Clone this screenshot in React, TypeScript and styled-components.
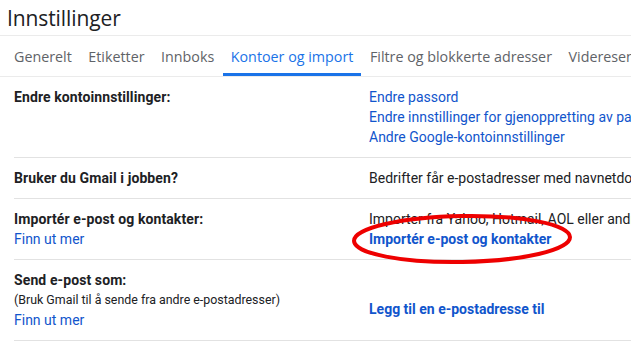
import styled, { createGlobalStyle } from "styled-components";

const Global = createGlobalStyle`
    html, body { margin: 0; padding: 0; background: #ffffff; }
    body { font-family: Roboto, "Liberation Sans", Arial, sans-serif; color: #202124; }
`

const Page = styled.div`
    position: relative;
    width: 631px;
    height: 347px;
    overflow: hidden;
    white-space: nowrap;
`

const Header = styled.div`
    height: 36px;
    border-bottom: 1px solid #ebebeb;
    box-sizing: border-box;
    padding-left: 7px;
    display: flex;
    align-items: center;
`

const Title = styled.h1`
    margin: 0;
    font-family: "Open Sans", Roboto, sans-serif;
    font-size: 21px;
    font-weight: 400;
    color: #202124;
    letter-spacing: -0.1px;
`

const TabBar = styled.div`
    display: flex;
    height: 41px;
    padding-left: 6px;
    border-bottom: 1px solid #ebebeb;
    box-sizing: border-box;
`

const TabItem = styled.div<{ $active?: boolean }>`
    display: flex;
    align-items: center;
    padding: 0 8px;
    margin-right: 0.5px;
    font-family: "Open Sans", Roboto, sans-serif;
    font-size: 14.3px;
    font-weight: 500;
    color: ${p => p.$active ? '#1a73e8' : '#5f6368'};
    border-bottom: 3px solid ${p => p.$active ? '#1a73e8' : 'transparent'};
    padding-top: 3px;
`

const Row = styled.div`
    display: grid;
    grid-template-columns: 355px 1fr;
    margin-left: 14px;
    padding: 10px 0;
    border-bottom: 1px solid #e2e2e2;
    line-height: 20px;
    font-size: 14px;
`

const Label = styled.div`
    display: flex;
    flex-direction: column;
`

const Strong = styled.span`
    font-weight: 700;
    color: #202124;
    letter-spacing: 0.1px;
`

const Note = styled.span`
    font-size: 12.4px;
    color: #202124;
    line-height: 20px;
`

const Value = styled.div<{ $offset?: number }>`
    display: flex;
    flex-direction: column;
    padding-top: ${p => p.$offset || 0}px;
`

const Link = styled.a<{ $bold?: boolean }>`
    color: #1155cc;
    text-decoration: none;
    font-weight: ${p => p.$bold ? 700 : 400};
    cursor: pointer;
`

const Text = styled.span`
    color: #202124;
`

const Mark = styled.svg`
    position: absolute;
    left: 350px;
    top: 211px;
    pointer-events: none;
`

const tabs = ['Generelt', 'Etiketter', 'Innboks', 'Kontoer og import', 'Filtre og blokkerte adresser', 'Videresending og POP/IMAP']

export default function App() {
    return <Page>
        <Global />
        <Header>
            <Title>Innstillinger</Title>
        </Header>
        <TabBar>
            {tabs.map((t, i) => <TabItem key={i} $active={i == 3}>{t}</TabItem>)}
        </TabBar>

        <Row>
            <Label><Strong>Endre kontoinnstillinger:</Strong></Label>
            <Value>
                <Link>Endre passord</Link>
                <Link>Endre innstillinger for gjenoppretting av passord</Link>
                <Link>Andre Google-kontoinnstillinger</Link>
            </Value>
        </Row>

        <Row>
            <Label><Strong>Bruker du Gmail i jobben?</Strong></Label>
            <Value>
                <Text>Bedrifter får e-postadresser med navnetdomenet sitt</Text>
            </Value>
        </Row>

        <Row>
            <Label>
                <Strong>Importér e-post og kontakter:</Strong>
                <Link>Finn ut mer</Link>
            </Label>
            <Value>
                <Text>Importer fra Yahoo, Hotmail, AOL eller andre</Text>
                <Link $bold>Importér e-post og kontakter</Link>
            </Value>
        </Row>

        <Row>
            <Label>
                <Strong>Send e-post som:</Strong>
                <Note>(Bruk Gmail til å sende fra andre e-postadresser)</Note>
                <Link>Finn ut mer</Link>
            </Label>
            <Value $offset={29}>
                <Link $bold>Legg til en e-postadresse til</Link>
            </Value>
        </Row>

        <Mark width="226" height="56" viewBox="0 0 226 56">
            <ellipse cx="112" cy="28" rx="108" ry="23" fill="none" stroke="#ee0000" strokeWidth="4" transform="rotate(-1 112 28)" />
        </Mark>
    </Page>
}
